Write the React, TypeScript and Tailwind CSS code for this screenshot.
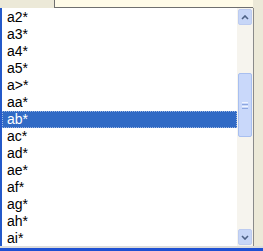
import React from "react";

const items = ["a2*", "a3*", "a4*", "a5*", "a>*", "aa*", "ab*", "ac*", "ad*", "ae*", "af*", "ag*", "ah*", "ai*"];

function Arrow({ up }: { up?: boolean }) {
  return (
    <div className="h-[16px] w-[14px] rounded-[2px] border border-[#bccbf0] bg-[#c7d6f7] flex items-center justify-center">
      <svg width="8" height="5" viewBox="0 0 8 5">
        <path d={up ? "M1 4 L4 1 L7 4" : "M1 1 L4 4 L7 1"} stroke="#4d6185" strokeWidth="1.6" fill="none" />
      </svg>
    </div>
  );
}

export default function App() {
  return (
    <div className="w-[263px] h-[251px] bg-[#ece9d8] flex flex-col overflow-hidden" style={{ fontFamily: "'Liberation Sans', Arial, sans-serif" }}>
      <div className="h-[8px] flex shrink-0">
        <div className="w-[54px] bg-[#ece9d8]" />
        <div className="flex-1 bg-[#fffbe8] border-l border-b border-[#6f6f6f]" />
        <div className="w-[10px] bg-[#ece9d8]" />
      </div>
      <div className="flex flex-1 min-h-0">
        <div className="flex flex-1 min-w-0 border-l-2 border-[#2459c9] bg-white">
          <div className="flex-1 flex flex-col pt-[1px]">
            {items.map((t) => (
              <div
                key={t}
                className={`h-[17px] leading-[17px] text-[14px] pl-[5px] ${
                  t === "ab*" ? "bg-[#316ac5] text-white outline-1 outline-dotted outline-[#9fb6e0] -outline-offset-1" : "text-black"
                }`}
              >
                {t}
              </div>
            ))}
          </div>
          <div className="w-[16px] flex flex-col items-center bg-[#f6f4ee] pt-[1px] pb-[1px]">
            <Arrow up />
            <div className="flex-1 w-full flex flex-col items-center pt-[48px]">
              <div className="h-[64px] w-[14px] rounded-[2px] border border-[#a8bff0] bg-[#c9d8fa] flex flex-col items-center justify-center gap-[1px]">
                <div className="h-[1px] w-[6px] bg-[#eef3fe]" />
                <div className="h-[1px] w-[6px] bg-[#8ca6e0]" />
                <div className="h-[1px] w-[6px] bg-[#eef3fe]" />
                <div className="h-[1px] w-[6px] bg-[#8ca6e0]" />
              </div>
            </div>
            <Arrow />
          </div>
        </div>
        <div className="w-[10px] border-l border-[#8a8a8a] bg-[#ece9d8]" />
      </div>
      <div className="h-[2px] bg-[#dcdcdc] shrink-0" />
      <div className="h-[3px] bg-[#1e50d2] shrink-0" />
    </div>
  );
}
